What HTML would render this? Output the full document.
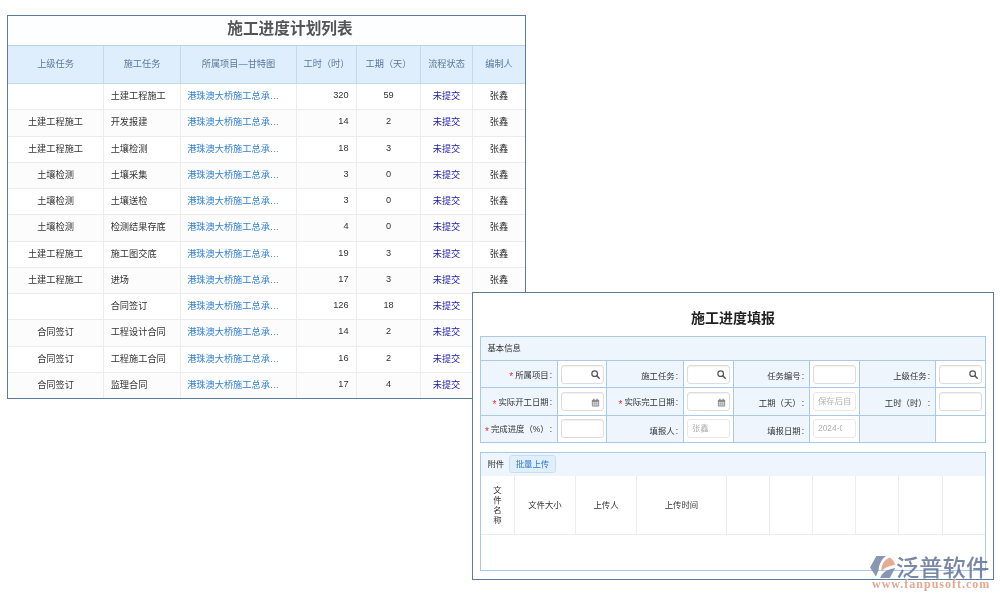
<!DOCTYPE html>
<html lang="zh-CN"><head><meta charset="utf-8"><title>施工进度</title>
<style>
html,body{margin:0;padding:0;background:#fff;}
body{width:1000px;height:600px;position:relative;overflow:hidden;font-family:"Liberation Sans","Noto Sans CJK SC",sans-serif;font-size:9px;color:#333;}
#p1{position:absolute;left:7px;top:15px;width:517px;height:382px;border:1px solid #5b7a9c;background:#fcfeff;}
#p1 .ttl{box-sizing:border-box;height:30px;line-height:25px;text-align:center;padding-left:47px;font-size:15.7px;font-weight:bold;color:#555;border-bottom:1px solid #b9d3ea;}
table.lt{border-collapse:collapse;table-layout:fixed;width:517px;}
table.lt th{height:34px;padding:0 0 3px 0;background:#dfeefc;color:#587a9c;font-weight:normal;font-size:9.2px;border-right:1px solid #c5d9ea;border-bottom:1px solid #c5d9ea;}
table.lt td{height:22.25px;padding:0 0 3px 0;font-size:9.2px;border-right:1px solid #ececec;border-bottom:1px solid #ececec;white-space:nowrap;overflow:hidden;background:#fff;}
table.lt th:last-child,table.lt td:last-child{border-right:none;}
table.lt tr:last-child td{border-bottom:none;}
table.lt td.c{text-align:center;}
table.lt td.l{text-align:left;padding-left:6.7px;}
table.lt td.r{text-align:right;padding-right:7.5px;}
table.lt td.lk{color:#3380d0;padding-left:6.2px;}
table.lt td.st{color:#1a1aa8;}
#p2{position:absolute;left:472px;top:292px;width:520px;height:286px;border:1px solid #5b7a9c;background:#fff;}
#p2 .ttl2{position:absolute;left:0;width:100%;top:15px;text-align:center;font-size:14px;font-weight:bold;color:#222;line-height:20px;}
.fs{position:absolute;left:7px;width:504px;border:1px solid #a9c9e6;background:#fff;}
#fs1{top:43px;height:105px;}
#fs2{top:159px;height:117px;}
.fh{height:23px;line-height:23px;background:#eef5fd;font-size:8.4px;padding-left:6.4px;color:#333;border-bottom:1px solid #a9c9e6;}
#fs2 .fh{border-bottom:none;}
table.ft{border-collapse:collapse;table-layout:fixed;width:504px;}
table.ft td{height:26.3px;padding:0;border-right:1px solid #a9c9e6;border-bottom:1px solid #a9c9e6;font-size:8.4px;white-space:nowrap;}
table.ft td:last-child{border-right:none;}
table.ft tr:last-child td{border-bottom:none;}
table.ft td.lb{background:#eef5fd;text-align:right;padding:2px 5px 0 0;height:24.3px;color:#333;}
table.ft td.in{background:#fff;}
i.rq{color:#e03030;font-style:normal;margin-right:2px;font-family:"Liberation Sans",sans-serif;font-size:10px;vertical-align:-2.6px;}
b.cl{font-weight:normal;margin-left:1px;}
.ip{display:block;position:relative;box-sizing:content-box;margin-left:3px;width:36.6px;height:17px;padding-left:4px;border:1px solid #ddd;border-radius:3px;box-shadow:inset 0 1px 1px rgba(0,0,0,.06);background:#fff;line-height:17px;font-size:8.4px;color:#b2b2b2;overflow:hidden;white-space:nowrap;}
.ic{position:absolute;right:2.5px;top:4.6px;width:9px;height:9px;}
.btn{display:inline-block;margin-left:4.6px;height:16px;line-height:16px;padding:0 6px;border:1px solid #c9ddf0;border-radius:3px;background:#e1effc;color:#2a7ad0;vertical-align:middle;margin-top:-2px;}
table.at{border-collapse:collapse;table-layout:fixed;width:504px;}
table.at th{height:56px;padding:0 0 2px 0;font-weight:normal;font-size:8.4px;color:#333;border-right:1px solid #ececec;border-bottom:1px solid #ececec;background:#fff;}
table.at th:last-child{border-right:none;}
.v{display:inline-block;line-height:10px;position:relative;top:1px;}
#wm{position:absolute;left:0;top:0;}
#wmlogo{position:absolute;left:864px;top:550px;opacity:.9;}
#wmt{position:absolute;left:896px;top:553.4px;font-size:23.3px;font-weight:500;line-height:30px;color:#5a6991;opacity:.8;transform:scaleY(.96);transform-origin:50% 45%;white-space:nowrap;}
#wmu{position:absolute;left:872px;top:576.6px;font-family:"Liberation Serif",serif;font-weight:bold;font-size:12px;line-height:14px;letter-spacing:1px;color:#e3a98f;white-space:nowrap;}
i.mk{position:absolute;right:0;top:1px;bottom:1px;width:12.5px;background:#fff;}
.ip.ph{border-color:#e8e8e8;box-shadow:none;}
#p1,#p2,#wm{will-change:transform;}
table.lt tr:nth-child(odd) td{background:#fcfcfc;}

</style></head><body>
<div id="p1">
<div class="ttl">施工进度计划列表</div>
<table class="lt">
<colgroup><col style="width:95.5px"><col style="width:77px"><col style="width:116px"><col style="width:60px"><col style="width:64px"><col style="width:52px"><col style="width:52.5px"></colgroup>
<tr class="hd"><th>上级任务</th><th>施工任务</th><th>所属项目—甘特图</th><th>工时（时）</th><th>工期（天）</th><th>流程状态</th><th>编制人</th></tr>
<tr><td class="c"></td><td class="l">土建工程施工</td><td class="l lk">港珠澳大桥施工总承…</td><td class="r">320</td><td class="c">59</td><td class="c st">未提交</td><td class="c">张鑫</td></tr>
<tr><td class="c">土建工程施工</td><td class="l">开发报建</td><td class="l lk">港珠澳大桥施工总承…</td><td class="r">14</td><td class="c">2</td><td class="c st">未提交</td><td class="c">张鑫</td></tr>
<tr><td class="c">土建工程施工</td><td class="l">土壤检测</td><td class="l lk">港珠澳大桥施工总承…</td><td class="r">18</td><td class="c">3</td><td class="c st">未提交</td><td class="c">张鑫</td></tr>
<tr><td class="c">土壤检测</td><td class="l">土壤采集</td><td class="l lk">港珠澳大桥施工总承…</td><td class="r">3</td><td class="c">0</td><td class="c st">未提交</td><td class="c">张鑫</td></tr>
<tr><td class="c">土壤检测</td><td class="l">土壤送检</td><td class="l lk">港珠澳大桥施工总承…</td><td class="r">3</td><td class="c">0</td><td class="c st">未提交</td><td class="c">张鑫</td></tr>
<tr><td class="c">土壤检测</td><td class="l">检测结果存底</td><td class="l lk">港珠澳大桥施工总承…</td><td class="r">4</td><td class="c">0</td><td class="c st">未提交</td><td class="c">张鑫</td></tr>
<tr><td class="c">土建工程施工</td><td class="l">施工图交底</td><td class="l lk">港珠澳大桥施工总承…</td><td class="r">19</td><td class="c">3</td><td class="c st">未提交</td><td class="c">张鑫</td></tr>
<tr><td class="c">土建工程施工</td><td class="l">进场</td><td class="l lk">港珠澳大桥施工总承…</td><td class="r">17</td><td class="c">3</td><td class="c st">未提交</td><td class="c">张鑫</td></tr>
<tr><td class="c"></td><td class="l">合同签订</td><td class="l lk">港珠澳大桥施工总承…</td><td class="r">126</td><td class="c">18</td><td class="c st">未提交</td><td class="c">张鑫</td></tr>
<tr><td class="c">合同签订</td><td class="l">工程设计合同</td><td class="l lk">港珠澳大桥施工总承…</td><td class="r">14</td><td class="c">2</td><td class="c st">未提交</td><td class="c">张鑫</td></tr>
<tr><td class="c">合同签订</td><td class="l">工程施工合同</td><td class="l lk">港珠澳大桥施工总承…</td><td class="r">16</td><td class="c">2</td><td class="c st">未提交</td><td class="c">张鑫</td></tr>
<tr><td class="c">合同签订</td><td class="l">监理合同</td><td class="l lk">港珠澳大桥施工总承…</td><td class="r">17</td><td class="c">4</td><td class="c st">未提交</td><td class="c">张鑫</td></tr>
</table>
</div>
<div id="p2">
<div class="ttl2">施工进度填报</div>
<div class="fs" id="fs1">
<div class="fh">基本信息</div>
<table class="ft">
<colgroup><col style="width:76.5px"><col style="width:49px"><col style="width:77px"><col style="width:50px"><col style="width:76px"><col style="width:50px"><col style="width:76px"><col style="width:49.5px"></colgroup>
<tr>
<td class="lb"><i class="rq">*</i>所属项目<b class="cl">:</b></td><td class="in"><span class="ip"><svg class="ic" viewBox="0 0 16 16"><circle cx="6.5" cy="6.5" r="5" fill="none" stroke="#555" stroke-width="2.2"/><path d="M10.3 10.3 L14.6 14.6" stroke="#555" stroke-width="2.6" stroke-linecap="round"/></svg></span></td>
<td class="lb">施工任务<b class="cl">:</b></td><td class="in"><span class="ip"><svg class="ic" viewBox="0 0 16 16"><circle cx="6.5" cy="6.5" r="5" fill="none" stroke="#555" stroke-width="2.2"/><path d="M10.3 10.3 L14.6 14.6" stroke="#555" stroke-width="2.6" stroke-linecap="round"/></svg></span></td>
<td class="lb">任务编号<b class="cl">:</b></td><td class="in"><span class="ip"></span></td>
<td class="lb">上级任务<b class="cl">:</b></td><td class="in"><span class="ip"><svg class="ic" viewBox="0 0 16 16"><circle cx="6.5" cy="6.5" r="5" fill="none" stroke="#555" stroke-width="2.2"/><path d="M10.3 10.3 L14.6 14.6" stroke="#555" stroke-width="2.6" stroke-linecap="round"/></svg></span></td>
</tr>
<tr>
<td class="lb"><i class="rq">*</i>实际开工日期<b class="cl">:</b></td><td class="in"><span class="ip"><svg class="ic cal" viewBox="0 0 16 16"><rect x="1.5" y="3" width="13" height="12" rx="1.5" fill="#8a8a8a"/><rect x="3" y="7" width="10" height="6.5" fill="#d8d8d8"/><path d="M3 10.2H13M6.3 7V13.5M9.7 7V13.5" stroke="#999" stroke-width=".8"/><rect x="4" y="0.8" width="2.2" height="4" rx="1" fill="#8a8a8a"/><rect x="9.8" y="0.8" width="2.2" height="4" rx="1" fill="#8a8a8a"/></svg></span></td>
<td class="lb"><i class="rq">*</i>实际完工日期<b class="cl">:</b></td><td class="in"><span class="ip"><svg class="ic cal" viewBox="0 0 16 16"><rect x="1.5" y="3" width="13" height="12" rx="1.5" fill="#8a8a8a"/><rect x="3" y="7" width="10" height="6.5" fill="#d8d8d8"/><path d="M3 10.2H13M6.3 7V13.5M9.7 7V13.5" stroke="#999" stroke-width=".8"/><rect x="4" y="0.8" width="2.2" height="4" rx="1" fill="#8a8a8a"/><rect x="9.8" y="0.8" width="2.2" height="4" rx="1" fill="#8a8a8a"/></svg></span></td>
<td class="lb">工期（天）<b class="cl">:</b></td><td class="in"><span class="ip ph">保存后自</span></td>
<td class="lb">工时（时）<b class="cl">:</b></td><td class="in"><span class="ip"></span></td>
</tr>
<tr>
<td class="lb"><i class="rq">*</i>完成进度（%）<b class="cl">:</b></td><td class="in"><span class="ip"></span></td>
<td class="lb">填报人<b class="cl">:</b></td><td class="in"><span class="ip ph">张鑫</span></td>
<td class="lb">填报日期<b class="cl">:</b></td><td class="in"><span class="ip ph">2024-0<i class="mk"></i></span></td>
<td class="lb"></td><td class="in"></td>
</tr>
</table>
</div>
<div class="fs" id="fs2">
<div class="fh">附件<span class="btn">批量上传</span></div>
<table class="at">
<colgroup><col style="width:33.5px"><col style="width:61px"><col style="width:61px"><col style="width:90px"><col style="width:43px"><col style="width:43px"><col style="width:43px"><col style="width:43px"><col style="width:44px"><col style="width:42.5px"></colgroup>
<tr><th><span class="v">文<br>件<br>名<br>称</span></th><th>文件大小</th><th>上传人</th><th>上传时间</th><th></th><th></th><th></th><th></th><th></th><th></th></tr>
</table>
</div>
</div>
<div id="wm">
<svg id="wmlogo" viewBox="0 0 1000 600" width="60" height="36">
<path d="M205 100 L365 100 C300 150 250 230 245 330 L200 440 L100 290 Z" fill="#7d8cab"/>
<path d="M290 350 C285 260 330 160 430 125 C480 150 510 200 515 250 C420 260 340 300 290 350 Z" fill="#e3a385"/>
<path d="M270 465 C300 390 350 330 520 300 L430 465 Z" fill="#7d8cab"/>
</svg>
<span id="wmt">泛普软件</span>
<span id="wmu">www.fanpusoft.com</span>
</div>
</body></html>
